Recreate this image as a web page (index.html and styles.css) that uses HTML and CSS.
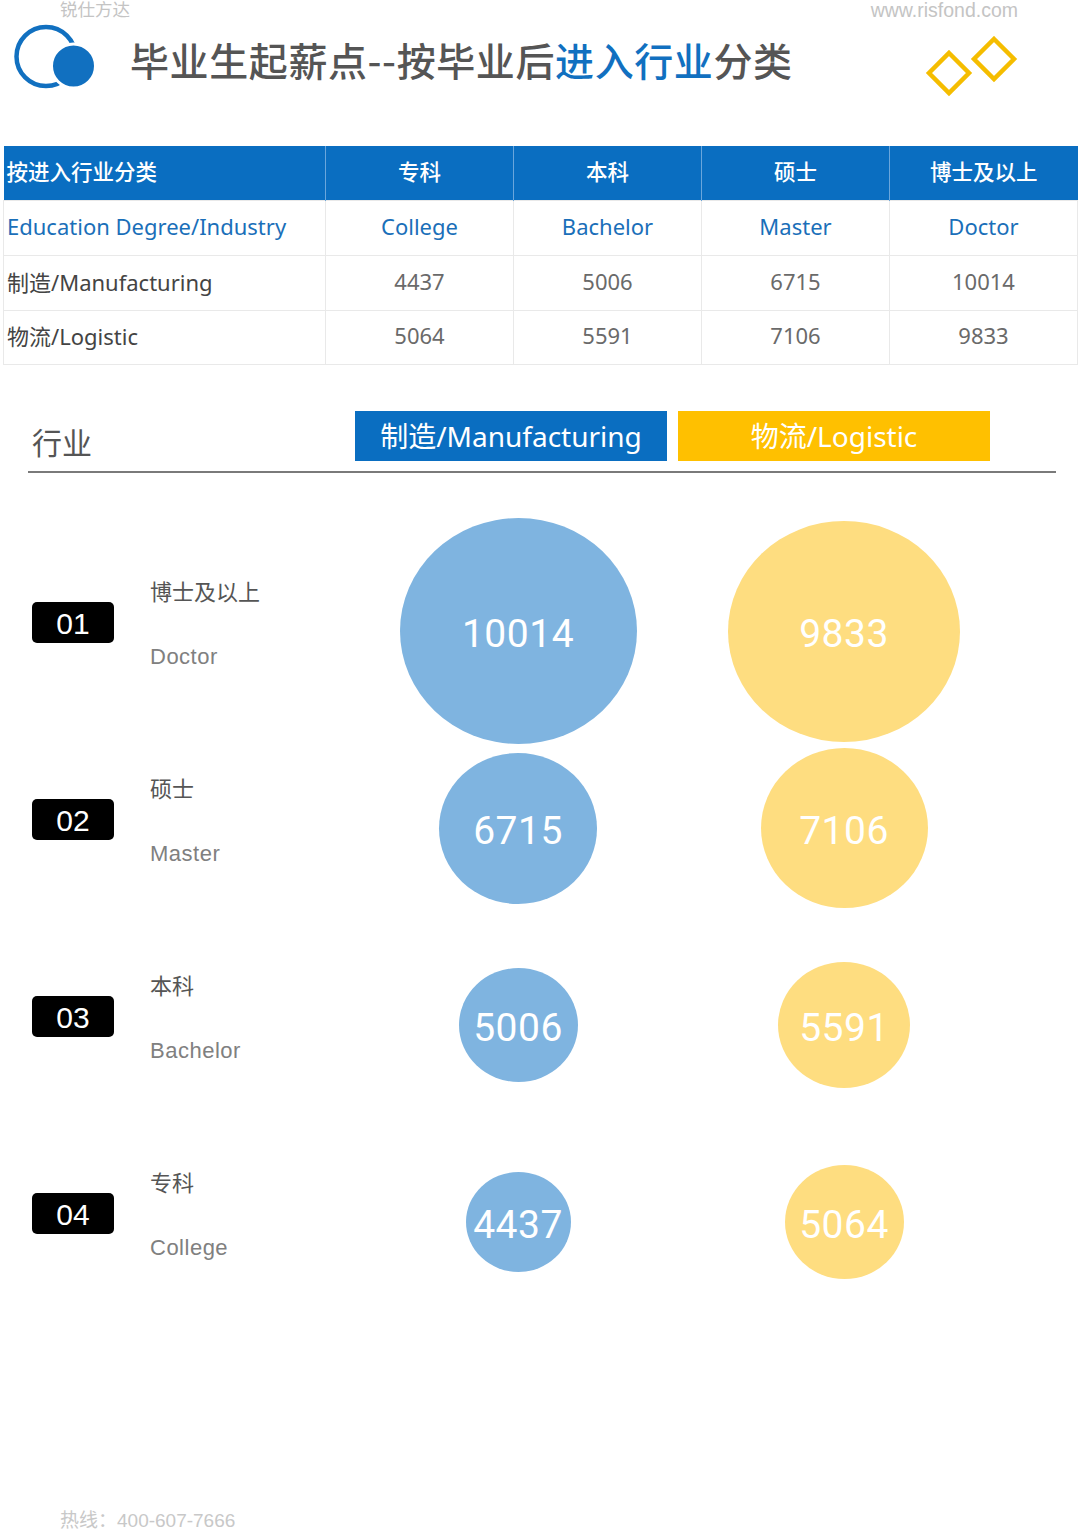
FILE: index.html
```html
<!DOCTYPE html>
<html lang="zh-CN">
<head>
<meta charset="utf-8">
<title>毕业生起薪点--按毕业后进入行业分类</title>
<link rel="stylesheet" href="styles.css">
</head>
<body>
<div class="page">
  <div class="brandbar">
    <span class="brand">锐仕方达</span>
    <span class="site">www.risfond.com</span>
  </div>
  <div class="titlebar">
    <svg class="logo" width="86" height="68" viewBox="0 0 86 68">
      <circle cx="32" cy="33.5" r="29.5" fill="none" stroke="#1170c0" stroke-width="4.5"/>
      <circle cx="59.5" cy="43" r="22" fill="#1170c0" stroke="#fff" stroke-width="3"/>
    </svg>
    <h1 class="title">毕业生起薪点--按毕业后<span class="hl">进入行业</span>分类</h1>
    <svg class="diamonds" width="96" height="66" viewBox="0 0 96 66">
      <path d="M25 17 L45 37 L25 57 L5 37 Z" fill="none" stroke="#f5bd00" stroke-width="4.5"/>
      <path d="M70 3 L90 23 L70 43 L50 23 Z" fill="none" stroke="#f5bd00" stroke-width="4.5"/>
    </svg>
  </div>

  <table class="data">
    <thead>
      <tr><th class="first">按进入行业分类</th><th>专科</th><th>本科</th><th>硕士</th><th>博士及以上</th></tr>
    </thead>
    <tbody>
      <tr class="en"><td class="first">Education Degree/Industry</td><td>College</td><td>Bachelor</td><td>Master</td><td>Doctor</td></tr>
      <tr><td class="first">制造/Manufacturing</td><td>4437</td><td>5006</td><td>6715</td><td>10014</td></tr>
      <tr><td class="first">物流/Logistic</td><td>5064</td><td>5591</td><td>7106</td><td>9833</td></tr>
    </tbody>
  </table>

  <div class="legend">
    <span class="legend-title">行业</span>
    <span class="tag tag-blue">制造/Manufacturing</span>
    <span class="tag tag-yellow">物流/Logistic</span>
  </div>

  <div class="rows">
    <div class="row">
      <div class="label">
        <span class="badge">01</span>
        <div class="names"><span class="cn">博士及以上</span><span class="en">Doctor</span></div>
      </div>
      <div class="cell"><div class="bubble blue" style="width:237px;height:226px">10014</div></div>
      <div class="cell"><div class="bubble yellow" style="width:232px;height:221px">9833</div></div>
    </div>
    <div class="row">
      <div class="label">
        <span class="badge">02</span>
        <div class="names"><span class="cn">硕士</span><span class="en">Master</span></div>
      </div>
      <div class="cell"><div class="bubble blue" style="width:158px;height:151px">6715</div></div>
      <div class="cell"><div class="bubble yellow" style="width:167px;height:160px">7106</div></div>
    </div>
    <div class="row">
      <div class="label">
        <span class="badge">03</span>
        <div class="names"><span class="cn">本科</span><span class="en">Bachelor</span></div>
      </div>
      <div class="cell"><div class="bubble blue" style="width:119px;height:114px">5006</div></div>
      <div class="cell"><div class="bubble yellow" style="width:132px;height:126px">5591</div></div>
    </div>
    <div class="row">
      <div class="label">
        <span class="badge">04</span>
        <div class="names"><span class="cn">专科</span><span class="en">College</span></div>
      </div>
      <div class="cell"><div class="bubble blue" style="width:105px;height:100px">4437</div></div>
      <div class="cell"><div class="bubble yellow" style="width:119px;height:114px">5064</div></div>
    </div>
  </div>

  <div class="footer">热线：400-607-7666</div>
</div>
</body>
</html>
```

FILE: styles.css
```css
* { box-sizing: border-box; }
html, body { margin: 0; padding: 0; background: #fff; }
body {
  font-family: "Noto Sans", "Noto Sans CJK SC", sans-serif;
  color: #555;
}
.page { width: 1080px; height: 1531px; overflow: hidden; }

.brandbar {
  height: 20px;
  display: flex;
  justify-content: space-between;
  align-items: center;
  padding: 0 62px 0 60px;
  font-family: "Liberation Sans", "Noto Sans CJK SC", sans-serif;
  line-height: 20px;
  color: #c4c4c4;
}
.brand { font-size: 17.5px; }
.site { font-size: 19.5px; }

.titlebar {
  height: 80px;
  display: flex;
  align-items: center;
  padding-left: 14px;
}
.logo { flex: none; margin-top: -6px; }
.title {
  margin: 0 0 0 30px;
  font-family: "Noto Sans CJK SC", sans-serif;
  font-weight: 500;
  font-size: 39px;
  letter-spacing: 0.6px;
  color: #555;
  line-height: 46px;
  flex: 1;
  margin-top: -2px;
}
.title .hl { color: #1170c0; }
.diamonds { flex: none; margin-right: 60px; margin-top: 18px; }

.data {
  margin: 46px 0 0 3px;
  width: 1074px;
  border-collapse: collapse;
  table-layout: fixed;
  font-size: 22px;
}
.data th, .data td {
  width: 188px;
  text-align: center;
  padding: 0 4px 4px;
  white-space: nowrap;
}
.data th.first, .data td.first {
  width: 322px;
  text-align: left;
  padding-left: 3px;
}
.data thead th {
  height: 54px;
  background: #0a6ec1;
  color: #fff;
  font-weight: 500;
  font-family: "Noto Sans CJK SC", sans-serif;
  font-size: 21.5px;
  border-left: 1.5px solid #6aa6dc;
}
.data thead th.first { border-left: none; }
.data tbody td {
  height: 55px;
  border: 1px solid #e9e9e9;
  color: #6a6a6a;
}
.data tbody tr:last-child td { height: 54px; }
.data tbody td.first { color: #444; }
.data tbody tr.en td { color: #1a6fb9; }

.legend {
  margin: 46px 24px 0 28px;
  height: 62px;
  display: flex;
  align-items: flex-end;
  border-bottom: 2px solid #7a7a7a;
  padding-bottom: 10px;
}
.legend-title {
  width: 327px;
  padding-left: 4px;
  font-family: "Noto Sans CJK SC", sans-serif;
  font-size: 30px;
  line-height: 36px;
  color: #555;
  margin-bottom: 2px;
}
.tag {
  width: 312px;
  height: 50px;
  display: flex;
  align-items: center;
  justify-content: center;
  font-size: 28px;
  color: #fff;
  margin-right: 11px;
  padding-bottom: 2px;
}
.tag-blue { background: #0a6ec1; }
.tag-yellow { background: #ffc000; }

.rows { margin-top: 60px; }
.row {
  height: 197px;
  display: grid;
  grid-template-columns: 360px 316px 336px;
  align-items: center;
}
.label {
  display: flex;
  align-items: center;
  padding-left: 32px;
  gap: 36px;
  margin-bottom: 16px;
}
.badge {
  width: 82px;
  height: 41px;
  border-radius: 5px;
  background: #000;
  color: #fff;
  font-family: "Liberation Sans", sans-serif;
  font-size: 30px;
  line-height: 43px;
  text-align: center;
  margin-top: -2px;
}
.names {
  display: flex;
  flex-direction: column;
  gap: 37px;
}
.names .cn {
  font-family: "Noto Sans CJK SC", sans-serif;
  font-size: 22px;
  line-height: 30px;
  color: #555;
}
.names .en {
  font-family: "Liberation Sans", sans-serif;
  font-size: 22px;
  letter-spacing: 0.5px;
  line-height: 30px;
  color: #808080;
}
.cell {
  display: flex;
  justify-content: center;
  align-items: center;
  height: 197px;
}
.bubble {
  flex: none;
  border-radius: 50%;
  display: flex;
  align-items: center;
  justify-content: center;
  font-family: Roboto, sans-serif;
  font-size: 39px;
  color: #fff;
  letter-spacing: 0.5px;
  padding-top: 5px;
}
.bubble.blue { background: #7fb4e0; }
.bubble.yellow { background: #fedd80; }

.footer {
  margin-top: 189px;
  padding-left: 60px;
  font-family: "Liberation Sans", "Noto Sans CJK SC", sans-serif;
  font-size: 19px;
  line-height: 22px;
  color: #c8c8c8;
}
```
